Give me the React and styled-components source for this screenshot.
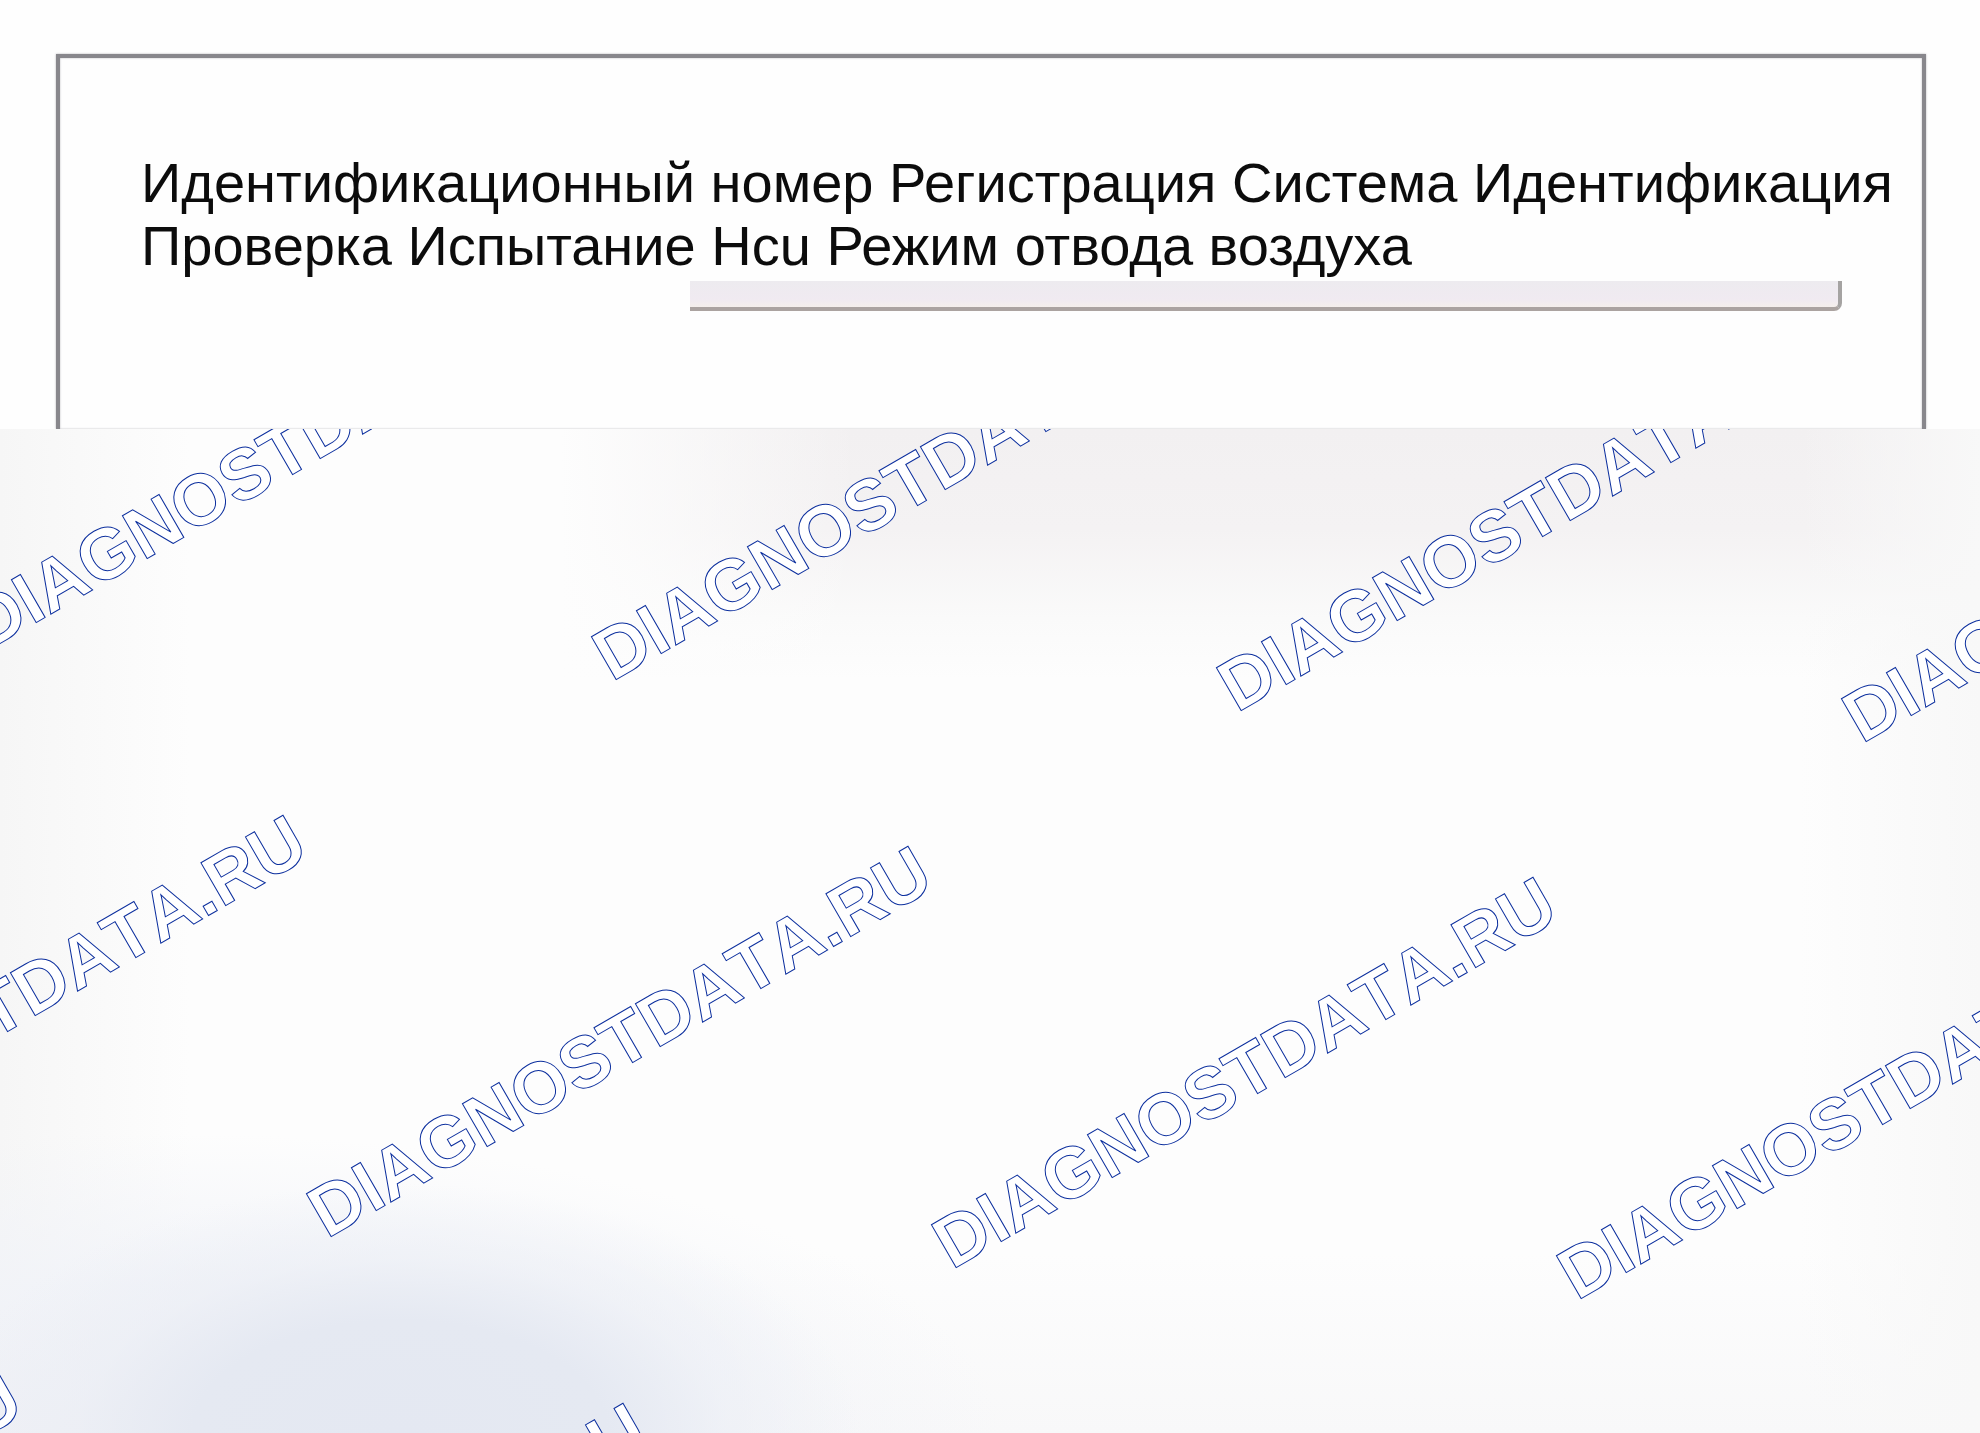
import React from 'react';
import styled, { createGlobalStyle } from 'styled-components';

const GlobalStyle = createGlobalStyle`
  * {
    box-sizing: border-box;
  }

  body {
    margin: 0;
    background-color: #fdfdfd;
    font-family: "Liberation Sans", Arial, sans-serif;
  }
`;

const Page = styled.div`
  display: flex;
  flex-direction: column;
  min-height: 100vh;
  overflow: hidden;
`;

const Sheet = styled.header`
  padding: 54px 54px 0 56px;
  background-color: #fefefe;
`;

const Frame = styled.section`
  padding: 93px 0 118px 81px;
  border: 4px solid #88878c;
  border-bottom: none;
  box-shadow: 0 0 2px #b4b3b8, inset 0 0 2px #b4b3b8;
  background-color: #fefefe;
`;

const Title = styled.h1`
  margin: 0;
  color: #0c0c0c;
  font-size: 56px;
  font-weight: 400;
  line-height: 63px;
`;

const FieldEdge = styled.div`
  height: 30px;
  margin: 4px 80px 0 549px;
  border-right: 4px solid #a5a3a2;
  border-bottom: 4px solid #aba3a0;
  border-bottom-right-radius: 8px;
  background: linear-gradient(to bottom, #edebef 0, #f0eaf1 18px, #f5efeb 26px);
`;

const Canvas = styled.main`
  position: relative;
  flex: 1;
  min-height: 1004px;
  overflow: hidden;
  background:
    radial-gradient(ellipse 460px 250px at 400px 100%, #e4e8f2 0, #e5e9f2 45%, rgba(235, 238, 245, 0.6) 70%, rgba(244, 246, 250, 0) 100%),
    radial-gradient(ellipse 840px 300px at 160px 100%, #eeeff4 0, rgba(241, 243, 248, 0.9) 50%, rgba(247, 249, 252, 0) 100%),
    linear-gradient(to right, #f6f6f6 0, rgba(249, 249, 249, 0.8) 100px, rgba(253, 253, 253, 0) 190px),
    linear-gradient(to left, #f8f8f8 0, rgba(253, 253, 253, 0) 180px),
    linear-gradient(to top, #f8f8f9 0, rgba(253, 253, 253, 0) 180px),
    linear-gradient(to right, #fdfdfd 560px, rgba(253, 253, 253, 0) 860px) top / 100% 260px no-repeat,
    linear-gradient(to bottom, #f2f0f1 0, #f4f2f3 100px, #fafafa 190px, #fdfdfd 250px);
`;

const Watermark = styled.span`
  position: absolute;
  color: #ffffff;
  font-size: 72px;
  font-weight: 700;
  font-kerning: none;
  line-height: 72px;
  white-space: nowrap;
  transform: rotate(-30deg);
  transform-origin: 0 61px;
  -webkit-text-stroke: 1px #0c2f9e;
  pointer-events: none;
  user-select: none;
`;

const WATERMARK_TEXT = 'DIAGNOSTDATA.RU';

// the watermark repeats on a slanted grid
const START = { x: 612, y: 192 };
const COLUMN_STEP = { x: 625, y: 31 };
const ROW_STEP = { x: -285, y: 557 };

const marks = [];
for (let row = 0; row < 3; row++) {
  // the last row only reaches into the bottom left corner
  const lastCol = row === 2 ? 0 : 2;
  for (let col = -1; col <= lastCol; col++) {
    marks.push({
      id: `${row}-${col}`,
      left: START.x + col * COLUMN_STEP.x + row * ROW_STEP.x,
      top: START.y + col * COLUMN_STEP.y + row * ROW_STEP.y,
    });
  }
}

function App() {
  return (
    <>
      <GlobalStyle />
      <Page>
        <Sheet>
          <Frame>
            <Title>
              Идентификационный номер Регистрация Система Идентификация
              Проверка Испытание Hcu Режим отвода воздуха
            </Title>
            <FieldEdge />
          </Frame>
        </Sheet>
        <Canvas>
          {marks.map((mark) => (
            <Watermark key={mark.id} style={{ left: mark.left, top: mark.top }}>
              {WATERMARK_TEXT}
            </Watermark>
          ))}
        </Canvas>
      </Page>
    </>
  );
}

export default App;
